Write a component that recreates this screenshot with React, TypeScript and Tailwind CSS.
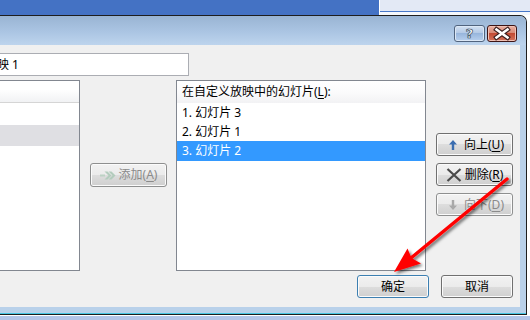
import React from "react";

const BTN =
  "flex items-center justify-center rounded-[3px] border bg-[linear-gradient(#f2f2f2,#ebebeb_50%,#dddddd_50%,#cfcfcf)] shadow-[inset_0_0_0_1px_#fbfbfb]";

function Key({ children }: { children: React.ReactNode }) {
  return <span className="underline underline-offset-[2px] decoration-1">{children}</span>;
}

function WinButton({
  children,
  disabled,
  focused,
  className = "",
}: {
  children: React.ReactNode;
  disabled?: boolean;
  focused?: boolean;
  className?: string;
}) {
  const tone = focused
    ? "border-[#3c7fb1] shadow-[inset_0_0_0_1px_#c4e6fa]"
    : disabled
    ? "border-[#8e8f8f] text-[#8a8a8a]"
    : "border-[#707070]";
  return <div className={`${BTN} ${tone} ${className}`}>{children}</div>;
}

function TitleBar() {
  return (
    <div className="h-[29px] flex justify-end items-start pt-[9px] pr-[9px] gap-[2px] bg-[linear-gradient(#99b4d3,#abc5e3_55%,#bdd4ed)]">
      {/* help */}
      <div className="w-[31px] h-[17px] rounded-[3px] border border-[#51647e] bg-[linear-gradient(#d3e1f2,#b4cae6_45%,#98b6dc_50%,#b8d0ee)] shadow-[inset_0_0_0_1px_#dce8f6] flex items-center justify-center">
        <span className="text-[13px] leading-none font-bold text-white font-['DejaVu_Sans',sans-serif] [-webkit-text-stroke:0.6px_#3b4a5e] [text-shadow:0_0_1px_#3b4a5e]">
          ?
        </span>
      </div>
      {/* close */}
      <div className="w-[30px] h-[17px] rounded-[3px] border border-[#3d1515] bg-[linear-gradient(#eab0a2,#d88a77_45%,#c34a33_50%,#d3735d)] shadow-[inset_0_0_0_1px_#f0c0b4]">
        <svg width="28" height="15" viewBox="0 0 28 15">
          <path d="M8.5 3.5 L19.5 11.5 M19.5 3.5 L8.5 11.5" stroke="#3a1f1f" strokeWidth="4.8" strokeLinecap="square" />
          <path d="M8.5 3.5 L19.5 11.5 M19.5 3.5 L8.5 11.5" stroke="#ffffff" strokeWidth="2.6" strokeLinecap="square" />
        </svg>
      </div>
    </div>
  );
}

function UpIcon({ color }: { color: string }) {
  return (
    <svg width="16" height="12" viewBox="0 0 16 12">
      <path d="M8 1 L12 5.5 L9.2 5.5 L9.2 11 L6.8 11 L6.8 5.5 L4 5.5 Z" fill={color} />
    </svg>
  );
}

function DownIcon({ color }: { color: string }) {
  return (
    <svg width="16" height="12" viewBox="0 0 16 12">
      <path d="M8 11 L12 6.5 L9.2 6.5 L9.2 1 L6.8 1 L6.8 6.5 L4 6.5 Z" fill={color} />
    </svg>
  );
}

function DeleteIcon() {
  return (
    <svg width="16" height="14" viewBox="0 0 16 14">
      <path d="M1.5 1 L14.5 13 M14.5 1 L1.5 13" stroke="#4b4b4b" strokeWidth="2.2" />
    </svg>
  );
}

function AddIcon() {
  return (
    <svg width="16" height="9" viewBox="0 0 16 9">
      <rect x="0" y="3.5" width="5" height="2" fill="#bcd2c4" />
      <path d="M4.5 0.5 L8.5 4.5 L4.5 8.5 L7.5 8.5 L11.5 4.5 L7.5 0.5 Z" fill="#b3ccbd" />
      <path d="M8.5 0.5 L12.5 4.5 L8.5 8.5 L11.5 8.5 L15.5 4.5 L11.5 0.5 Z" fill="#b3ccbd" />
    </svg>
  );
}

function Content() {
  return (
    <div className="w-[520px] h-[262px] bg-[#f0f0f0] flex flex-col">
      {/* name input */}
      <div className="mt-[8px] w-[189px] h-[23px] border border-l-0 border-[#abadb3] bg-white flex items-center overflow-hidden">
        <span className="-ml-[3px] whitespace-nowrap leading-none">映 1</span>
      </div>

      <div className="mt-[4px] flex items-start">
        {/* left list (cut off) */}
        <div className="w-[80px] h-[191px] border-t border-r border-b border-[#828790] bg-white flex flex-col">
          <div className="h-[22px] border-b border-[#d5d5d5] bg-[linear-gradient(#ffffff,#ffffff_40%,#f1f2f4)]" />
          <div className="h-[22px]" />
          <div className="h-[21px] bg-[#dfdfe3]" />
        </div>

        {/* add */}
        <div className="w-[96px] flex">
          <WinButton disabled className="ml-[10px] mt-[83px] w-[77px] h-[24px] gap-[3px]">
            <AddIcon />
            <span className="text-[#8a8a8a]">
              添加(<Key>A</Key>)
            </span>
          </WinButton>
        </div>

        {/* right list */}
        <div className="w-[250px] h-[191px] border border-[#828790] bg-white flex flex-col">
          <div className="h-[22px] pl-[5px] flex items-center bg-[linear-gradient(#ffffff,#fbfbfc_50%,#f2f2f4)]">
            在自定义放映中的幻灯片(<Key>L</Key>):
          </div>
          <div className="h-[19px] pl-[5px] flex items-center">1. 幻灯片 3</div>
          <div className="h-[19px] pl-[5px] flex items-center">2. 幻灯片 1</div>
          <div className="h-[20px] pl-[5px] flex items-center bg-[#3399ff] text-white">3. 幻灯片 2</div>
        </div>

        {/* move buttons */}
        <div className="ml-[10px] mt-[53px] flex flex-col gap-[7px]">
          <WinButton className="w-[77px] h-[23px] gap-[3px]">
            <UpIcon color="#3a6db0" />
            <span>
              向上(<Key>U</Key>)
            </span>
          </WinButton>
          <WinButton className="w-[77px] h-[23px] gap-[3px]">
            <DeleteIcon />
            <span>
              删除(<Key>R</Key>)
            </span>
          </WinButton>
          <WinButton disabled className="w-[77px] h-[23px] gap-[3px]">
            <DownIcon color="#a9a9a9" />
            <span>
              向下(<Key>D</Key>)
            </span>
          </WinButton>
        </div>
      </div>

      <div className="mt-[4px] flex justify-end pr-[7px] gap-[12px]">
        <WinButton focused className="w-[72px] h-[23px]">
          确定
        </WinButton>
        <WinButton className="w-[72px] h-[23px]">取消</WinButton>
      </div>
    </div>
  );
}

function RedArrow() {
  return (
    <svg className="absolute left-0 top-0 pointer-events-none" width="530" height="320" viewBox="0 0 530 320">
      <defs>
        <filter id="sh" x="-20%" y="-20%" width="140%" height="140%">
          <feDropShadow dx="2" dy="2" stdDeviation="1.6" floodColor="#000" floodOpacity="0.55" />
        </filter>
      </defs>
      <g filter="url(#sh)">
        <path d="M507 179 L411 258" stroke="#ff0000" strokeWidth="3.4" strokeLinecap="round" />
        <path d="M394 272 L407.5 248.5 L411.5 258 L421 263.5 Z" fill="#ff0000" />
      </g>
    </svg>
  );
}

export default function App() {
  return (
    <div className="relative w-[530px] h-[320px] overflow-hidden bg-white text-[12px] text-black font-['Noto_Sans','Noto_Sans_CJK_SC',sans-serif]">
      <div className="flex h-[15px]">
        <div className="w-[379px] bg-[#4472c4]" />
        <div className="flex-1 flex flex-col border-l border-white">
          <div className="h-[12px] bg-[#e3e9f5] border-b border-[#4777c8]" />
          <div className="flex-1 bg-[#f5f8fc]" />
        </div>
      </div>

      <div className="w-[527px] h-[300px] flex flex-col border-t border-r border-b border-[#1e1e1e] rounded-tr-[7px] bg-[#b9d1ea] overflow-hidden">
        <TitleBar />
        <div className="flex h-[262px]">
          <Content />
        </div>
        <div className="flex-1 border-b border-[#47c6e2]" />
      </div>
      <div className="h-[1px] bg-white" />
      <div className="h-[4px] bg-[#b3c5e8]" />

      <RedArrow />
    </div>
  );
}
